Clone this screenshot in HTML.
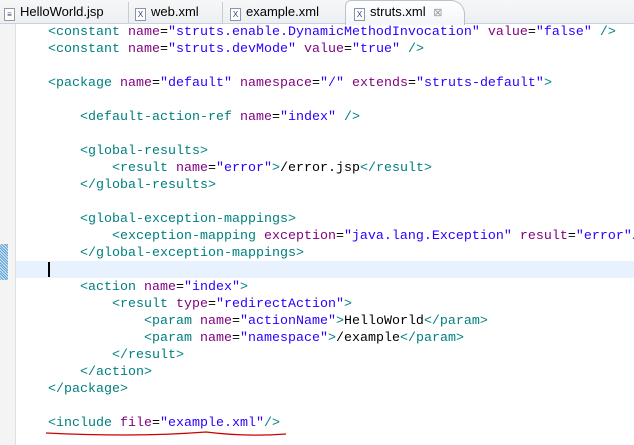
<!DOCTYPE html><html><head><style>
body{margin:0;width:634px;height:445px;overflow:hidden;background:#fff;font-family:"Liberation Sans",sans-serif;position:relative}
.bar{position:absolute;left:0;top:0;width:634px;height:23px;background:linear-gradient(#f7f7f7,#eceff3);border-bottom:1px solid #c9d2dc}
.tab{position:absolute;top:0;height:23px;font-size:13px;line-height:23px;color:#000}
.tab i{display:inline-block;width:9px;height:11px;border:1px solid #8a95a5;background:#fff;font-style:normal;font-size:8px;line-height:11px;text-align:center;color:#2b3f75;margin-right:5px;vertical-align:-1px}
.sep{position:absolute;top:2px;width:1px;height:21px;background:#c6ccd4}
.act{position:absolute;left:345px;top:0;width:118px;height:24px;background:linear-gradient(#fff,#f3f6fa);border:1px solid #b9c3cf;border-bottom:none;border-radius:6px 14px 0 0}
.gut{position:absolute;left:0;top:24px;width:15px;height:421px;background:#f4f4f4;border-right:1px solid #e0e0e0}
.hatch{position:absolute;left:0;top:244px;width:8px;height:36px;background:repeating-linear-gradient(45deg,#5aa0d6 0 1px,#dbeaf7 1px 2px)}
.hl{position:absolute;left:16px;top:261px;width:618px;height:17px;background:#e8f2fe}
.cur{position:absolute;left:48px;top:262px;width:2px;height:15px;background:#000}
pre{position:absolute;left:48px;top:24px;margin:0;font-family:"Liberation Mono",monospace;font-size:13.33px;line-height:17px;color:#008080}
.a{color:#7f007f}.v{color:#2a00ff}.t{color:#000}
.sq{position:absolute;left:46px;top:429px}
</style></head><body>
<div class="bar"></div>
<div class="tab" style="left:4px"><i style="border-color:#999">≡</i>HelloWorld.jsp</div>
<div class="sep" style="left:128px"></div>
<div class="tab" style="left:135px"><i>X</i>web.xml</div>
<div class="sep" style="left:222px"></div>
<div class="tab" style="left:230px"><i>X</i>example.xml</div>
<div class="act"></div>
<div class="tab" style="left:354px"><i>X</i>struts.xml <span style="color:#999;font-size:11px;margin-left:4px">⊠</span></div>
<div class="gut"></div><div class="hatch"></div><div class="hl"></div><div class="cur"></div>
<pre>&lt;constant <span class="a">name</span><span class="t">=</span><span class="v">"struts.enable.DynamicMethodInvocation"</span> <span class="a">value</span><span class="t">=</span><span class="v">"false"</span> /&gt;
&lt;constant <span class="a">name</span><span class="t">=</span><span class="v">"struts.devMode"</span> <span class="a">value</span><span class="t">=</span><span class="v">"true"</span> /&gt;

&lt;package <span class="a">name</span><span class="t">=</span><span class="v">"default"</span> <span class="a">namespace</span><span class="t">=</span><span class="v">"/"</span> <span class="a">extends</span><span class="t">=</span><span class="v">"struts-default"</span>&gt;

    &lt;default-action-ref <span class="a">name</span><span class="t">=</span><span class="v">"index"</span> /&gt;

    &lt;global-results&gt;
        &lt;result <span class="a">name</span><span class="t">=</span><span class="v">"error"</span>&gt;<span class="t">/error.jsp</span>&lt;/result&gt;
    &lt;/global-results&gt;

    &lt;global-exception-mappings&gt;
        &lt;exception-mapping <span class="a">exception</span><span class="t">=</span><span class="v">"java.lang.Exception"</span> <span class="a">result</span><span class="t">=</span><span class="v">"error"</span>/&gt;
    &lt;/global-exception-mappings&gt;

    &lt;action <span class="a">name</span><span class="t">=</span><span class="v">"index"</span>&gt;
        &lt;result <span class="a">type</span><span class="t">=</span><span class="v">"redirectAction"</span>&gt;
            &lt;param <span class="a">name</span><span class="t">=</span><span class="v">"actionName"</span>&gt;<span class="t">HelloWorld</span>&lt;/param&gt;
            &lt;param <span class="a">name</span><span class="t">=</span><span class="v">"namespace"</span>&gt;<span class="t">/example</span>&lt;/param&gt;
        &lt;/result&gt;
    &lt;/action&gt;
&lt;/package&gt;

&lt;include <span class="a">file</span><span class="t">=</span><span class="v">"example.xml"</span>/&gt;</pre>
<svg class="sq" width="250" height="12"><path d="M0 4 Q40 6 80 6 T160 3 Q200 8 240 5" stroke="#c00" stroke-width="1.2" fill="none"/></svg>
</body></html>
